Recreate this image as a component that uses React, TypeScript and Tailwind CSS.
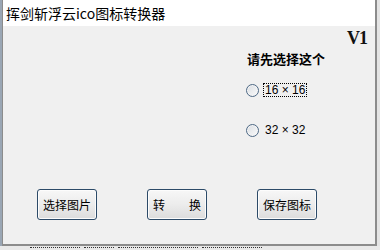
import React from "react";

const cjk = { fontFamily: '"Noto Sans CJK SC", "Liberation Sans", sans-serif' };

const Btn: React.FC<{ children: React.ReactNode }> = ({ children }) => (
  <button
    className="w-[60px] h-[31px] rounded-[3px] border border-[#2c4a68] bg-gradient-to-b from-[#f7f7f7] via-[#ececec] to-[#dcdcdc] shadow-[inset_0_0_0_1px_#fcfcfc] text-[12px] text-black flex items-center justify-center"
    style={cjk}
  >
    {children}
  </button>
);

const Radio: React.FC<{ label: string; focused?: boolean }> = ({ label, focused }) => (
  <div className="flex items-center h-[16px]">
    <span className="w-[13px] h-[13px] rounded-full border border-[#4d6885] bg-gradient-to-br from-[#d9dde2] to-[#fbfbfb] shadow-[inset_0_0_0_1px_#f4f4f4]" />
    <span
      className={
        "ml-[4px] px-[1px] leading-[12px] text-[12px] text-black " +
        (focused ? "border border-dotted border-black" : "border border-transparent")
      }
      style={{ fontFamily: '"Liberation Sans", sans-serif' }}
    >
      {label}
    </span>
  </div>
);

export default function App() {
  return (
    <div className="w-[380px] h-[250px] bg-[#e9e9e9] overflow-hidden flex flex-col">
      <div className="flex">
        <div className="w-[2px] h-[246px] bg-[#9aa6b4]" />
        <div className="w-[375px] h-[246px] border-l border-r-2 border-b-2 border-[#8c8c8c] flex flex-col">
          {/* title bar */}
          <div className="h-[26px] bg-white flex items-center pl-[3px]">
            <span className="text-[14px] text-black leading-none" style={cjk}>
              挥剑斩浮云ico图标转换器
            </span>
          </div>
          {/* body */}
          <div className="flex-1 bg-[#f0f0f0] flex flex-col">
            <div className="h-[20px] mt-[2px] flex justify-end pr-[8px]">
              <span
                className="text-[18px] font-bold leading-[20px] text-[#111] tracking-[-1px]"
                style={{ fontFamily: '"Liberation Serif", serif' }}
              >
                V1
              </span>
            </div>
            <div
              className="ml-[244px] mt-[3px] text-[13px] font-bold leading-[16px] text-black"
              style={cjk}
            >
              请先选择这个
            </div>
            <div className="ml-[243px] mt-[15px]">
              <Radio label="16 × 16" focused />
            </div>
            <div className="ml-[243px] mt-[24px]">
              <Radio label="32 × 32" />
            </div>
            <div className="ml-[34px] mt-[51px] flex gap-[50px]">
              <Btn>选择图片</Btn>
              <Btn>
                <span className="flex w-[48px] justify-between">
                  <span>转</span>
                  <span>换</span>
                </span>
              </Btn>
              <Btn>保存图标</Btn>
            </div>
          </div>
        </div>
        <div className="w-[3px] h-[246px] bg-[#e4e4e4]" />
      </div>
      <div className="h-[4px] overflow-hidden pl-[30px] flex gap-[4px] items-start pt-[1px]">
        <span className="w-[50px] h-[1px] border-t border-dotted border-[#333]" />
        <span className="w-[30px] h-[1px] border-t border-dotted border-[#333]" />
        <span className="w-[80px] h-[1px] border-t border-dotted border-[#333]" />
        <span className="w-[60px] h-[1px] border-t border-dotted border-[#333]" />
      </div>
    </div>
  );
}
